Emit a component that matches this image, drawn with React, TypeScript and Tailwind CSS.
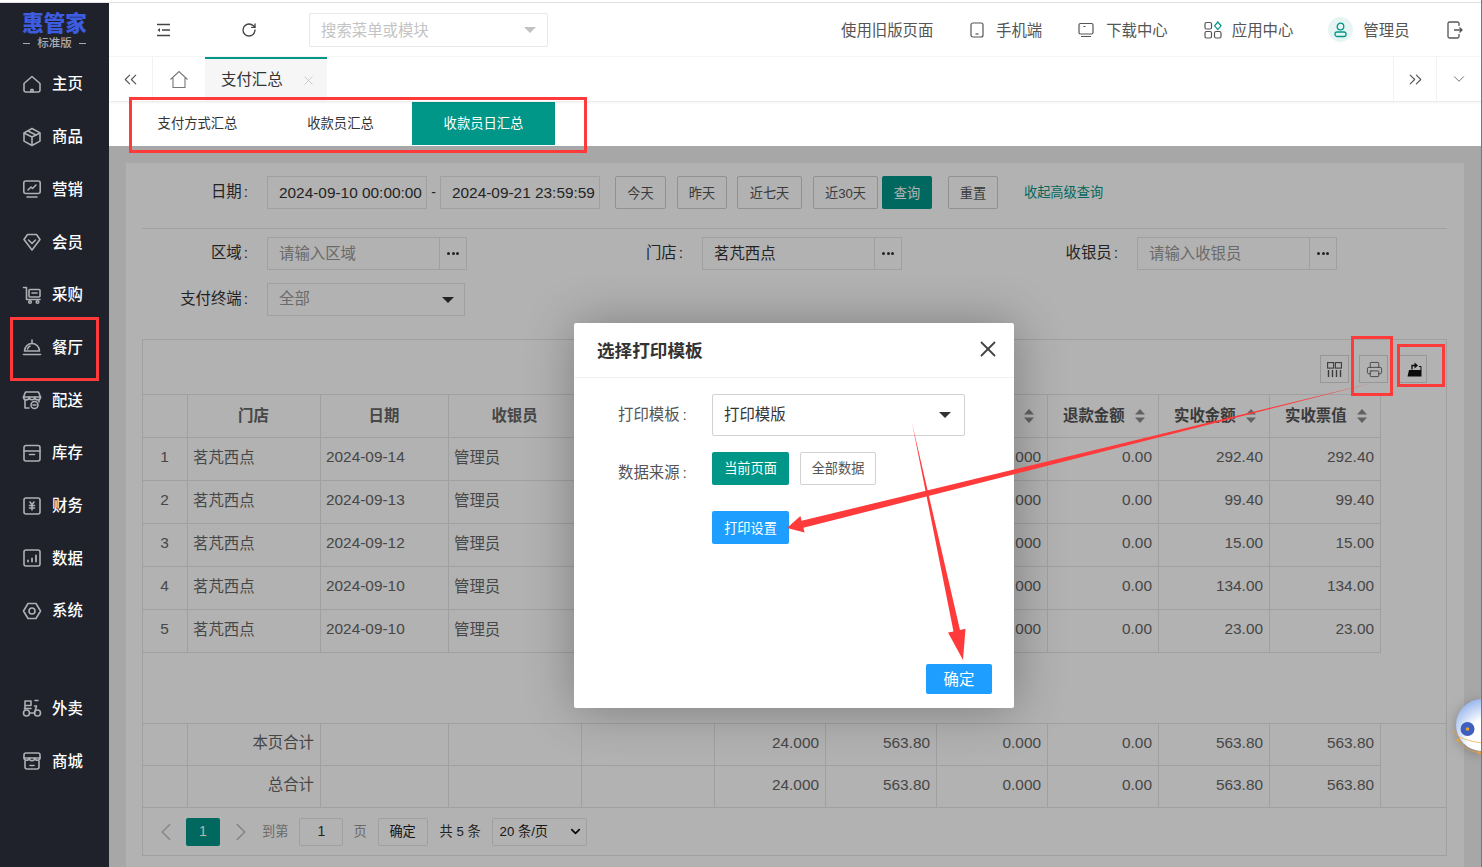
import React from "react";
import { RotateCw, Printer, ChevronLeft, ChevronRight, ChevronDown, ChevronsLeft, ChevronsRight, X } from "lucide-react";

const navTop = [
  ["主页", "home"], ["商品", "box"], ["营销", "market"], ["会员", "member"], ["采购", "cart"], ["餐厅", "bell"],
  ["配送", "delivery"], ["库存", "archive"], ["财务", "finance"], ["数据", "data"], ["系统", "system"],
];
const navBottom = [["外卖", "scooter"], ["商城", "mall"]];

function NavIcon({ name }: { name: string }) {
  const p = { fill: "none", stroke: "#aeb0b4", strokeWidth: 1.6, strokeLinejoin: "round" as const, strokeLinecap: "round" as const };
  return (
    <svg width="20" height="20" viewBox="0 0 20 20" {...p}>
      {name === "home" && <><path d="M2 9.5 10 2.5l8 7V16a2 2 0 0 1-2 2H4a2 2 0 0 1-2-2z" /><path d="M9 18v-2.5h2V18" /></>}
      {name === "box" && <><path d="M10 1.5l8 4.4v8.2l-8 4.4-8-4.4V5.9z" /><path d="M2.5 6.2 10 10l7.5-3.8M10 10v8" /><path d="M6 4l8 4" /></>}
      {name === "market" && <><rect x="1.8" y="2" width="16.4" height="12.5" rx="2" /><path d="M5 18h10" /><path d="M6 11l3-3 1.5 1.5L14 6" /></>}
      {name === "member" && <><path d="M5.5 2.5h9L18 7.5 10 18 2 7.5z" /><path d="M6.5 8l3.5 3.5L13.5 8" /></>}
      {name === "cart" && <><path d="M1.5 2.5h3v12h13.5" /><rect x="7" y="4.5" width="11" height="7.5" rx="1" /><path d="M10 8h5" /><circle cx="8" cy="17" r="1.3" /><circle cx="15.5" cy="17" r="1.3" /></>}
      {name === "bell" && <><path d="M2.5 14a7.5 7.5 0 0 1 15 0z" /><path d="M10 3v3.5" /><path d="M1.5 17.5h17" /><path d="M5.5 12a4.5 4.5 0 0 1 2.5-3" /></>}
      {name === "delivery" && <><path d="M3.5 2h13l2 5H1.5z" /><path d="M1.5 7a2.8 2.8 0 0 0 5.7 0 2.8 2.8 0 0 0 5.6 0 2.8 2.8 0 0 0 5.7 0" /><path d="M3 10.5V18h4M17 10.5V12" /><circle cx="12.5" cy="15" r="3.5" /><path d="M11 15h3" /></>}
      {name === "archive" && <><path d="M4 2.5h12a2 2 0 0 1 2 2V16a2 2 0 0 1-2 2H4a2 2 0 0 1-2-2V4.500a2 2 0 0 1 2-2z" /><path d="M2 8h16" /><path d="M7.500 11.500h5" /></>}
      {name === "finance" && <><rect x="2" y="2" width="16" height="16" rx="2" /><path d="M8 6l2 2.500L12 6M7.500 9.500h5M7.500 12h5M10 9v5" /></>}
      {name === "data" && <><rect x="2" y="2" width="16" height="16" rx="2" /><path d="M6 13.500v-1M10 13.500V10.500M14 13.500V7.500" strokeWidth="1.800" /></>}
      {name === "system" && <><path d="M6 2.500h8l4.500 7.500-4.500 7.500H6L1.500 10z" /><circle cx="10" cy="10" r="3" /></>}
      {name === "scooter" && <><circle cx="4.500" cy="15" r="3" /><circle cx="15.500" cy="15" r="3" /><path d="M7.500 15h5l2-7h-2M3 11V3h6v4.500H3M13 2.500h3" /><path d="M2.500 10.500h6.500" /></>}
      {name === "mall" && <><path d="M4 2h12a2 2 0 0 1 2 2v3H2V4a2 2 0 0 1 2-2z" /><path d="M2 7a2.700 2.700 0 0 0 5.300 0 2.700 2.700 0 0 0 5.400 0A2.700 2.700 0 0 0 18 7" /><path d="M3 10v6a2 2 0 0 0 2 2h10a2 2 0 0 0 2-2v-6" /><path d="M8 14.500h4" /></>}
    </svg>
  );
}

function Nav({ label, icon }: { label: string; icon: string }) {
  return (
    <div className="h-[52.7px] flex items-center pl-[22px] gap-[10px] text-white text-[15.4px] font-medium">
      <NavIcon name={icon} />
      <span>{label}</span>
    </div>
  );
}

function Sort() {
  return (
    <svg width="10" height="14" viewBox="0 0 10 14" fill="#8d8d8d" className="shrink-0">
      <path d="M5 0l5 5.500H0zM5 14 0 8.500h10z" />
    </svg>
  );
}

function Btn({ children, w }: { children: React.ReactNode; w: string }) {
  return <div className={`h-[33px] pt-[2px] ${w} flex items-center justify-center border border-[#d0d0d0] rounded-[2px] text-[13.2px] text-[#555] bg-white`}>{children}</div>;
}

function Label({ children }: { children: React.ReactNode }) {
  return <div className="w-[106px] text-right text-[15.4px] text-[#333] mr-[19px] shrink-0 pb-[2px]">{children}<span className="ml-[2px]">:</span></div>;
}

function Picker({ value, placeholder }: { value?: string; placeholder?: string }) {
  return (
    <div className="flex w-[200px] h-[33px] border border-[#e6e6e6] bg-white">
      <div className={`flex-1 pl-[11px] flex items-center text-[15.4px] ${value ? "text-[#333]" : "text-[#999]"}`}>{value ?? placeholder}</div>
      <div className="w-[27px] border-l border-[#e6e6e6] flex items-center justify-center gap-[1.5px]">
        <i className="w-[3px] h-[3px] rounded-full bg-[#333]" />
        <i className="w-[3px] h-[3px] rounded-full bg-[#333]" />
        <i className="w-[3px] h-[3px] rounded-full bg-[#333]" />
      </div>
    </div>
  );
}

const rows = [
  ["1", "茗芃西点", "2024-09-14", "管理员", "292.40"],
  ["2", "茗芃西点", "2024-09-13", "管理员", "99.40"],
  ["3", "茗芃西点", "2024-09-12", "管理员", "15.00"],
  ["4", "茗芃西点", "2024-09-10", "管理员", "134.00"],
  ["5", "茗芃西点", "2024-09-10", "管理员", "23.00"],
];
const base = "border border-[#e6e6e6] pl-[5px] pr-[6px] text-[15.4px] text-[#666] overflow-hidden whitespace-nowrap";
const head = `${base} h-[43px]`;
const cell = `${base} h-[43px] pb-[2px]`;
const num = `${base} h-[43px] pb-[4px]`;
const sumCell = `${base} border-t-0 h-[42px] pb-[4px]`;

function Cols() {
  return (
    <colgroup>
      {[45, 133, 128, 133, 133, 111, 111, 111, 111, 111, 111].map((w, i) => <col key={i} style={{ width: w }} />)}
    </colgroup>
  );
}

function SortHead({ label }: { label: string }) {
  return (
    <th className={`${head} font-bold`}>
      <div className="flex items-center pl-[10px] gap-[10px]">
        <span className="text-[#555]">{label}</span>
        <Sort />
      </div>
    </th>
  );
}

export default function App() {
  return (
    <div className="relative w-[1482px] h-[867px] overflow-hidden bg-white font-['Liberation_Sans','Noto_Sans_CJK_SC',sans-serif] border-r border-[#777]">
      <div className="h-[3px] pt-[2px]"><div className="h-px bg-[#e2e2e2]" /></div>
      <div className="flex h-[864px]">
        <aside className="w-[109px] shrink-0 bg-[#1f222b] flex flex-col">
          <div className="h-[54.700px] pt-[2px] flex flex-col items-center justify-center">
            <div className="text-[21.500px] leading-[24px] font-black text-[#3d5ce0]">惠管家</div>
            <div className="text-[11.500px] leading-[15px] font-medium text-[#a9abaf] flex items-center gap-[7.500px]">
              <i className="w-[7px] h-px bg-[#a9abaf]" />标准版<i className="w-[7px] h-px bg-[#a9abaf]" />
            </div>
          </div>
          {navTop.map(([l, i]) => <Nav key={l} label={l} icon={i} />)}
          <div className="h-[44.800px]" />
          {navBottom.map(([l, i]) => <Nav key={l} label={l} icon={i} />)}
        </aside>

        <main className="flex-1 flex flex-col min-w-0">
          <header className="h-[54px] shrink-0 flex items-center border-b border-[#f4f4f4] text-[15.4px] text-[#555]">
            <svg width="15" height="14" viewBox="0 0 15 14" fill="none" stroke="#444" strokeWidth="1.400" className="ml-[47px]">
              <path d="M1 1.500h13M6 7h8M1 12.500h13" />
              <path d="M4 5 1.500 7 4 9z" fill="#444" stroke="none" />
            </svg>
            <RotateCw size={16} strokeWidth={2} color="#444" className="ml-[70px]" />
            <div className="ml-[52px] w-[239px] h-[34px] border border-[#e8e8e8] rounded-[2px] flex items-center pl-[11px] pr-[11px] justify-between text-[#c4c4c4]">
              <span className="mt-[2px]">搜索菜单或模块</span>
              <i className="w-0 h-0 border-x-[6px] border-x-transparent border-t-[6px] border-t-[#c2c2c2]" />
            </div>
            <span className="ml-[293px] w-[92px] mt-[2px] whitespace-nowrap">使用旧版页面</span>
            <svg width="14" height="16" viewBox="0 0 14 16" fill="none" stroke="#555" strokeWidth="1.200" className="ml-[37px]">
              <rect x="1" y="1" width="12" height="14" rx="2" /><path d="M5.500 12h3" />
            </svg>
            <span className="ml-[12px] mt-[2px]">手机端</span>
            <svg width="16" height="16" viewBox="0 0 16 16" fill="none" stroke="#555" strokeWidth="1.200" className="ml-[36px]">
              <rect x="1" y="1.500" width="14" height="10.500" rx="1.500" /><path d="M3 14.500h10M5.500 4.500h2" />
            </svg>
            <span className="ml-[12px] mt-[2px]">下载中心</span>
            <svg width="18" height="18" viewBox="0 0 18 18" fill="none" stroke="#555" strokeWidth="1.200" className="ml-[36px]">
              <rect x="1" y="1.500" width="6.500" height="6.500" rx="1.500" />
              <rect x="1" y="10.500" width="6.500" height="6.500" rx="1.500" />
              <rect x="10.500" y="10.500" width="6.500" height="6.500" rx="1.500" />
              <path d="M13.800 1 17 4.800 13.800 8.600 10.600 4.800z" stroke="#009688" />
            </svg>
            <span className="ml-[10px] mt-[2px]">应用中心</span>
            <div className="ml-[35px] w-[25px] h-[25px] rounded-full bg-[#e6f5f3] flex items-center justify-center">
              <svg width="13" height="16" viewBox="0 0 13 16" fill="none" stroke="#009688" strokeWidth="1.300">
                <circle cx="6.500" cy="4.500" r="3.300" /><rect x="1" y="10" width="11" height="4.500" rx="2" />
              </svg>
            </div>
            <span className="ml-[10px] mt-[2px]">管理员</span>
            <svg width="16" height="18" viewBox="0 0 16 18" fill="none" stroke="#555" strokeWidth="1.300" className="ml-[37px]">
              <path d="M12 5V2.500A1.500 1.500 0 0 0 10.500 1h-8A1.500 1.500 0 0 0 1 2.500v13A1.500 1.500 0 0 0 2.500 17h8a1.500 1.500 0 0 0 1.500-1.500V13" />
              <path d="M7 9h8M12.500 6.500 15 9l-2.500 2.500" />
            </svg>
          </header>

          <div className="h-[45px] shrink-0 flex items-stretch border-b border-[#ededed] shadow-[0_1px_2px_rgba(0,0,0,0.05)] text-[15.4px] relative">
            <div className="w-[44px] flex items-center justify-center border-r border-[#f2f2f2]"><ChevronsLeft size={21} strokeWidth={1.300} color="#555" /></div>
            <div className="w-[52px] flex items-center justify-center">
              <svg width="20" height="19" viewBox="0 0 20 19" fill="none" stroke="#777" strokeWidth="1.100"><path d="M1.500 9.500 10 1.500l8.500 8M4 8v9.500h12V8" /></svg>
            </div>
            <div className="w-[122px] bg-[#f6f6f6] border-t-2 border-[#009688] flex items-center justify-between pl-[16px] pr-[11px] text-[#333]">
              <span>支付汇总</span>
              <X size={15} strokeWidth={1.100} color="#bbb" />
            </div>
            <div className="flex-1" />
            <div className="w-[43px] flex items-center justify-center border-l border-[#f2f2f2]"><ChevronsRight size={21} strokeWidth={1.300} color="#555" /></div>
            <div className="w-[45px] flex items-center justify-center border-l border-[#f2f2f2]"><ChevronDown size={18} strokeWidth={1.100} color="#555" /></div>
          </div>

          <div className="h-[44px] shrink-0 flex pl-[17px] text-[13.300px] text-[#333] bg-white">
            <div className="w-[143px] flex items-center justify-center">支付方式汇总</div>
            <div className="w-[143px] flex items-center justify-center">收款员汇总</div>
            <div className="w-[143px] h-[43px] flex items-center justify-center bg-[#009688] text-white">收款员日汇总</div>
          </div>

          <div className="relative flex-1 bg-[#f0f0f0] pt-[17px] pl-[17px] overflow-hidden">
            <div className="w-[1338px] h-[720px] bg-white pl-[16px] pr-[17px] pt-[14px]">
              <div className="flex items-center h-[32px] pb-px">
                <Label>日期</Label>
                <div className="w-[160px] h-[33px] border border-[#e6e6e6] flex items-center pl-[11px] text-[15.4px] text-[#333] whitespace-nowrap">2024-09-10 00:00:00</div>
                <span className="w-[13px] text-center text-[#333] text-[14px]">-</span>
                <div className="w-[160px] h-[33px] border border-[#e6e6e6] flex items-center pl-[11px] text-[15.4px] text-[#333] whitespace-nowrap">2024-09-21 23:59:59</div>
                <div className="ml-[15px]"><Btn w="w-[51px]">今天</Btn></div>
                <div className="ml-[11px]"><Btn w="w-[50px]">昨天</Btn></div>
                <div className="ml-[10px]"><Btn w="w-[65px]">近七天</Btn></div>
                <div className="ml-[11px]"><Btn w="w-[65px]">近30天</Btn></div>
                <div className="ml-[4px] w-[50px] h-[33px] pt-[2px] rounded-[2px] bg-[#009688] text-white text-[13.2px] flex items-center justify-center">查询</div>
                <div className="ml-[16px]"><Btn w="w-[50px]">重置</Btn></div>
                <span className="ml-[26px] text-[13.2px] text-[#009688]">收起高级查询</span>
              </div>
              <div className="border-t border-[#e6e6e6] mt-[19px] mb-[8px]" />
              <div className="flex">
                <div className="w-[435px] flex items-center"><Label>区域</Label><Picker placeholder="请输入区域" /></div>
                <div className="w-[435px] flex items-center"><Label>门店</Label><Picker value="茗芃西点" /></div>
                <div className="w-[435px] flex items-center"><Label>收银员</Label><Picker placeholder="请输入收银员" /></div>
              </div>
              <div className="flex items-center mt-[13px]">
                <Label>支付终端</Label>
                <div className="w-[198px] h-[33px] border border-[#e6e6e6] flex items-center justify-between pl-[11px] pr-[10px] text-[15.4px] text-[#999]">
                  <span className="pb-[2px]">全部</span>
                  <i className="w-0 h-0 border-x-[6px] border-x-transparent border-t-[6px] border-t-[#333]" />
                </div>
              </div>

              <div className="mt-[23px] w-[1305px] border border-[#e6e6e6] h-[517px] flex flex-col">
                <div className="h-[54px] pt-[4px] shrink-0 flex items-center justify-end pr-[19px] gap-[10px]">
                  <div className="w-[29px] h-[28px] border border-[#d8d8d8] flex items-center justify-center">
                    <svg width="15" height="15" viewBox="0 0 15 15" fill="none" stroke="#555" strokeWidth="1.100">
                      <rect x="0.600" y="0.600" width="6" height="5.500" /><rect x="8.400" y="0.600" width="6" height="5.500" />
                      <path d="M1.500 8v7M5.500 8v7M9.500 8v7M13.500 8v7" strokeWidth="1.400" />
                    </svg>
                  </div>
                  <div className="w-[29px] h-[28px] pl-[2px] border border-[#d8d8d8] flex items-center justify-center"><Printer size={17} strokeWidth={1.200} color="#555" /></div>
                  <div className="w-[29px] h-[28px] pl-[3px] border border-[#d8d8d8] flex items-center justify-center">
                    <svg width="15" height="15" viewBox="0 0 15 15"><path d="M0.500 14.500 2 8h12.500v6.500z" fill="#111" /><path d="M14 8V4.500h-2" stroke="#111" strokeWidth="1" fill="none" /><path d="M5 7.500V3.500h3" stroke="#111" strokeWidth="1.300" fill="none" /><path d="M7.500 0.500 11 3.500 7.500 6.500z" fill="#111" /></svg>
                  </div>
                </div>
                <table className="table-fixed border-collapse w-[1238px] -ml-px">
                  <Cols />
                  <thead>
                    <tr>
                      <th className={head} />
                      <th className={`${head} font-bold text-center text-[#555]`}>门店</th>
                      <th className={`${head} font-bold text-center text-[#555]`}>日期</th>
                      <th className={`${head} font-bold text-center text-[#555]`}>收银员</th>
                      <th className={head} /><th className={head} /><th className={head} />
                      <SortHead label="退款数量" /><SortHead label="退款金额" /><SortHead label="实收金额" /><SortHead label="实收票值" />
                    </tr>
                  </thead>
                  <tbody>
                    {rows.map((r) => (
                      <tr key={r[0]}>
                        <td className={`${num} text-center`}>{r[0]}</td>
                        <td className={cell}>{r[1]}</td>
                        <td className={num}>{r[2]}</td>
                        <td className={cell}>{r[3]}</td>
                        <td className={cell} /><td className={cell} /><td className={cell} />
                        <td className={`${num} text-right`}>0.000</td>
                        <td className={`${num} text-right`}>0.00</td>
                        <td className={`${num} text-right`}>{r[4]}</td>
                        <td className={`${num} text-right`}>{r[4]}</td>
                      </tr>
                    ))}
                  </tbody>
                </table>
                <div className="flex-1" />
                <div className="border-t border-[#e6e6e6] shrink-0">
                  <table className="table-fixed border-collapse w-[1238px] -ml-px">
                    <Cols />
                    <tbody>
                      {["本页合计", "总合计"].map((t) => (
                        <tr key={t}>
                          <td className={sumCell} />
                          <td className={`${sumCell} text-right`}>{t}</td>
                          <td className={sumCell} /><td className={sumCell} /><td className={sumCell} />
                          {["24.000", "563.80", "0.000", "0.00", "563.80", "563.80"].map((v, i) => (
                            <td key={i} className={`${sumCell} text-right`}>{v}</td>
                          ))}
                        </tr>
                      ))}
                    </tbody>
                  </table>
                </div>
                <div className="h-[48px] -mt-px shrink-0 border-t border-[#e6e6e6] flex items-center pl-[8px] text-[13.2px] text-[#333]">
                  <ChevronLeft size={30} strokeWidth={1.200} color="#c2c2c2" />
                  <div className="ml-[5px] w-[34px] h-[28px] rounded-[2px] bg-[#009688] text-white flex items-center justify-center text-[14px]">1</div>
                  <ChevronRight size={30} strokeWidth={1.200} color="#bbb" className="ml-[6px]" />
                  <span className="ml-[6px] text-[#999]">到第</span>
                  <div className="ml-[11px] w-[44px] h-[28px] border border-[#e6e6e6] rounded-[2px] flex items-center justify-center text-[14px]">1</div>
                  <span className="ml-[10px] text-[#999]">页</span>
                  <div className="ml-[11px] w-[50px] h-[28px] border border-[#e6e6e6] rounded-[2px] flex items-center justify-center text-[#222]">确定</div>
                  <span className="ml-[12px]">共 5 条</span>
                  <div className="ml-[11px] w-[95px] h-[28px] border border-[#e6e6e6] rounded-[2px] flex items-center justify-between pl-[7px] pr-[3px] text-[13.2px] text-[#222]">
                    <span>20 条/页</span>
                    <ChevronDown size={15} strokeWidth={2.800} color="#111" />
                  </div>
                </div>
              </div>
            </div>
            <div className="absolute inset-0 bg-black/30" />
          </div>
        </main>
      </div>

      <div className="absolute left-[574px] top-[323px] w-[440px] h-[385px] bg-white rounded-[2px] shadow-[1px_1px_50px_rgba(0,0,0,0.3)] flex flex-col">
        <div className="h-[55px] shrink-0 border-b border-[#f0f0f0] flex items-center justify-between pl-[23px] pr-[13px]">
          <span className="text-[17.6px] font-bold text-[#333] pt-[2px]">选择打印模板</span>
          <X size={26} strokeWidth={1.700} color="#444" className="-mt-[3px]" />
        </div>
        <div className="flex-1 relative pl-[44px] pt-[16px]">
          <div className="flex items-center h-[42px]">
            <span className="w-[94px] text-[15.4px] text-[#555] shrink-0">打印模板<span className="ml-[3px]">:</span></span>
            <div className="w-[253px] h-[42px] border border-[#d2d2d2] rounded-[2px] flex items-center justify-between pl-[11px] pr-[13px] text-[15.4px] text-[#333]">
              <span>打印模版</span>
              <i className="w-0 h-0 border-x-[6px] border-x-transparent border-t-[6px] border-t-[#333]" />
            </div>
          </div>
          <div className="flex mt-[16px]">
            <span className="w-[94px] text-[15.4px] text-[#555] shrink-0 pt-[9px]">数据来源<span className="ml-[3px]">:</span></span>
            <div className="flex gap-[11px] items-start">
              <div className="w-[77px] h-[33px] bg-[#009688] rounded-[2px] text-white text-[13.2px] flex items-center justify-center">当前页面</div>
              <div className="w-[76px] h-[33px] border border-[#d2d2d2] rounded-[2px] text-[#555] text-[13.2px] flex items-center justify-center">全部数据</div>
            </div>
          </div>
          <div className="ml-[94px] mt-[26px] w-[77px] h-[33px] pt-[2px] bg-[#1e9fff] rounded-[2px] text-white text-[13.2px] flex items-center justify-center">打印设置</div>
          <div className="absolute right-[22px] bottom-[14px] w-[66px] h-[30px] pt-[2px] bg-[#1e9fff] rounded-[2px] text-white text-[15.4px] flex items-center justify-center">确定</div>
        </div>
      </div>

      <svg className="absolute left-[1452px] top-[697px] drop-shadow-[0_2px_6px_rgba(0,0,0,0.25)]" width="30" height="60" viewBox="0 0 30 60">
        <defs>
          <radialGradient id="ball" cx="0.6" cy="0.75" r="0.9">
            <stop offset="0.4" stopColor="#ffffff" />
            <stop offset="1" stopColor="#7aa2e8" />
          </radialGradient>
        </defs>
        <circle cx="30" cy="28" r="26" fill="url(#ball)" />
        <circle cx="15.500" cy="32" r="7" fill="#3f5fbf" />
        <circle cx="15.500" cy="32" r="1.800" fill="#f0a030" />
        <path d="M2 33c0 6 12 11 28 13M8 44c2 6 10 11 22 12" fill="none" stroke="#f0a030" strokeWidth="0.700" />
        <circle cx="6" cy="43" r="1.600" fill="#f0a030" />
        <circle cx="27" cy="55.500" r="1.600" fill="#f0a030" />
      </svg>

      <svg className="absolute inset-0 pointer-events-none" width="1482" height="867" fill="none">
        <g stroke="#ff3a3a" strokeWidth="3">
          <rect x="130.500" y="98.500" width="455" height="53" />
          <rect x="11.500" y="318.500" width="86" height="61" />
          <rect x="1352.500" y="337.500" width="39" height="57" />
          <rect x="1398.500" y="345.500" width="45" height="40" />
        </g>
        <polygon fill="#ff3a3a" points="1372,383 803.400,527.800 804.600,532.500 787,528 800.400,515.900 801.600,520.800" />
        <polygon fill="#ff3a3a" points="912,423 960,630 965.500,628.800 963,660 948,632.600 953.500,631.400" />
      </svg>
    </div>
  );
}
